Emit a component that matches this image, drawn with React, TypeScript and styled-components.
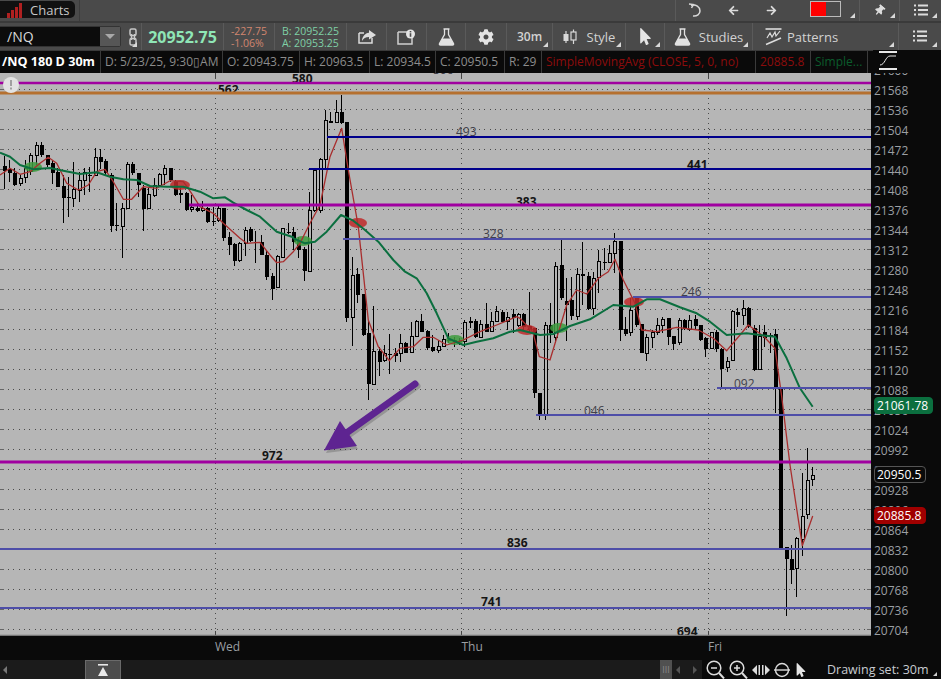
import React from "react";
import styled, { createGlobalStyle } from "styled-components";
import { FaArrowLeft, FaArrowRight, FaCog, FaMousePointer, FaThumbtack } from "react-icons/fa";

const Global = createGlobalStyle`
  html, body { margin: 0; padding: 0; background: #0a0a0a; }
  #root { width: 941px; height: 679px; overflow: hidden; }
  * { box-sizing: border-box; }
`;

const Page = styled.div`
  width: 941px; height: 679px; display: flex; flex-direction: column;
  font-family: "Open Sans", "Liberation Sans", sans-serif; background: #0a0a0a; overflow: hidden;
  & > * { flex: none; }
`;
const TopBar = styled.div`
  height: 23px; display: flex; align-items: stretch; background: #4a4a4a; border-bottom: 2px solid #3a3a3a;
`;
const TabHolder = styled.div`
  width: 80px; padding: 1px 0 0 0; border-right: 1px solid #3c3c3c;
`;
const Tab = styled.div`
  width: 75px; height: 17px; background: #111; border-radius: 0 5px 5px 0; display: flex; align-items: center;
  gap: 7px; padding-left: 7px; color: #c8c8c8; font-size: 13px;
`;
const Spacer = styled.div`flex: 1;`;
const ToolBar = styled.div`
  height: 28px; display: flex; align-items: stretch; background: #4a4a4a; border-bottom: 1px solid #3a3a3a;
`;
const Cell = styled.div<{ $w: number; $sep?: boolean; $tri?: boolean; $gap?: number; $lead?: boolean; $strong?: boolean; $inset?: number }>`
  position: relative; width: ${(p) => p.$w}px; flex: none; display: flex; align-items: center;
  justify-content: ${(p) => (p.$inset ? "flex-start" : "center")};
  padding-left: ${(p) => p.$inset ?? 0}px;
  gap: ${(p) => p.$gap ?? 5}px; color: #d2d2d2; font-size: ${(p) => (p.$strong ? 12 : 13)}px;
  font-weight: ${(p) => (p.$strong ? 600 : 400)};
  border-right: ${(p) => (p.$sep === false ? "none" : "1px solid #5a5a5a")};
  border-left: ${(p) => (p.$lead ? "1px solid #5a5a5a" : "none")};
  ${(p) => p.$tri && `&::after { content: ""; position: absolute; right: 4px; bottom: 3px; border-style: solid;
    border-width: 0 0 5px 5px; border-color: transparent transparent #d8d8d8 transparent; }`}
`;
const SymbolCell = styled.div`
  width: 125px; flex: none; padding: 3px 0 3px 0; display: flex;
`;
const SymbolBox = styled.div`
  width: 121px; background: #0c0c0c; border-radius: 0 3px 3px 0; display: flex; justify-content: space-between;
  align-items: stretch; color: #d8d8d8; font-size: 14px; border: 1px solid #333; border-left: none;
`;
const SymbolText = styled.span`padding-left: 7px; line-height: 19px;`;
const Drop = styled.div`
  width: 20px; background: #565656; display: flex; align-items: center; justify-content: center;
  &::after { content: ""; border-style: solid; border-width: 5px 5px 0 5px; border-color: #a8a8a8 transparent transparent transparent; }
`;
const Price = styled.span`color: #8fe6b6; font-size: 16px; font-weight: 700;`;
const Stack = styled.div<{ $c: string }>`
  display: flex; flex-direction: column; font-size: 10.5px; line-height: 12px; color: ${(p) => p.$c}; align-items: flex-start;
`;
const InfoBar = styled.div`
  height: 22px; display: flex; background: #0a0a0a; font-size: 12px; line-height: 21px;
`;
const Info = styled.div<{ $w: number; $c?: string; $b?: boolean }>`
  width: ${(p) => p.$w}px; flex: none; padding: 0 4px; overflow: hidden; white-space: nowrap;
  padding-left: ${(p) => (p.$b ? 2 : 4)}px;
  color: ${(p) => p.$c ?? "#8c8c8c"}; font-weight: ${(p) => (p.$b ? 700 : 400)};
  font-size: ${(p) => (p.$b ? "12.6px" : "12px")};
  border-right: 1px solid #3a3a3a;
`;
const ScaleBox = styled.div`
  flex: 1; margin-left: 5px; margin-top: -1px; padding: 1px 0 0 6px; height: 23px; background: #0a0a0a; position: relative; z-index: 2;
`;
const ChartRow = styled.div`height: 563px; display: flex;`;
const ChartBox = styled.div`
  position: relative; width: 871px; flex: none; background: #b6b6b6; overflow: hidden;
  svg { display: block; }
`;
const Axis = styled.div`
  position: relative; flex: 1; background: #0a0a0a; overflow: hidden; padding-left: 3px;
`;
const AxisList = styled.div`margin-top: -12px; display: flex; flex-direction: column;`;
const AxisLabel = styled.div`
  height: 20px; line-height: 20px; font-size: 12px; color: #9b9fa3;
`;
const Badge = styled.div<{ $bg: string; $top: number; $w: number; $bd?: string }>`
  position: absolute; left: 3px; top: ${(p) => p.$top}px; width: ${(p) => p.$w}px; height: 17px; background: ${(p) => p.$bg};
  border: 1px solid ${(p) => p.$bd ?? p.$bg}; border-radius: 4px; color: #fff; font-size: 12px; line-height: 15px; padding-left: 2px;
`;
const TimeAxis = styled.div`
  height: 24px; display: flex; padding-left: 215px; background: #0a0a0a; font-size: 12px; line-height: 22px; color: #9b9fa3;
`;
const TimeLabel = styled.div`width: 246.5px; flex: none;`;
const Bottom = styled.div`height: 19px; display: flex; align-items: stretch; background: #0a0a0a; overflow: hidden;`;
const Track = styled.div`
  width: 702px; background: #1b1b1b; display: flex; align-items: center;
`;
const ArrowGlyph = styled.div<{ $dir: "l" | "r"; $c?: string; $inset?: number }>`
  width: 0; height: 0; border-style: solid; border-width: 4px 0 4px 0; margin-left: ${(p) => p.$inset ?? 0}px;
  ${(p) => p.$dir === "l" ? `border-right: 4px solid ${p.$c ?? "#777"};` : `border-left: 4px solid ${p.$c ?? "#777"};`}
  border-top-color: transparent; border-bottom-color: transparent;
`;
const Thumb = styled.div`
  margin-left: 78px; width: 36px; height: 19px; background: #4c4c4c; border: 1px solid #6a6a6a; border-bottom: none;
  display: flex; align-items: center; justify-content: center;
`;
const ThumbRight = styled.div`
  margin-left: 539px; width: 12px; height: 19px; background: #505050; color: #888; font-size: 9px;
  display: flex; align-items: center; justify-content: center; letter-spacing: 0;
`;
const TrackArrows = styled.div`display: flex; align-items: center; gap: 13px; margin-left: 4px;`;
const ZoomTools = styled.div`
  display: flex; align-items: center; gap: 4px; padding-left: 4px; height: 100%;
`;
const Drawing = styled.div`
  position: relative; margin-left: 15px; width: 112px; color: #c8ccd0; font-size: 12.5px; line-height: 18px; white-space: nowrap;
  &::after { content: ""; position: absolute; right: 2px; bottom: 3px; border-style: solid; border-width: 0 0 4px 4px;
    border-color: transparent transparent #ccc transparent; }
`;
const Swatch = styled.div`
  width: 31px; height: 16px; border: 1px solid #bbb; display: flex; margin-top: -4px;
`;
const SwatchRed = styled.div`width: 15px; background: #ff0000;`;
const Tack = styled(FaThumbtack)`transform: rotate(40deg);`;

type C = [number, number, number, number, number];
const segA: C[] = [
[168,182,138,238,1],[178,190,150,215,1],[190,225,175,228,1],[205,220,195,228,0],[175,203,150,218,0],[135,185,130,195,0],[105,137,97,165,0],[105,135,97,140,1],
[135,165,135,170,1],[158,188,150,222,1],[186,230,175,232,1],[228,263,195,338,1],[261,263,200,322,1],[238,265,155,290,0],[210,240,185,275,0],[188,212,175,255,0],
[194,196,170,245,1],[142,196,115,198,0],[142,155,118,178,1],[152,190,148,195,1],[195,347,190,365,1],[346,349,278,362,1],[295,350,280,445,0],[163,295,155,297,0],
[163,190,155,195,1],[190,225,190,262,1],[235,298,225,362,1],[252,295,235,298,0],[225,255,205,262,0],[193,225,190,228,0],[175,192,165,225,0],[175,210,175,215,1],
[212,255,210,258,1],[250,254,235,280,1],[250,300,245,302,1],[292,298,255,305,0],[295,302,275,305,1],[295,300,272,305,0],[295,335,290,338,1],[334,337,290,348,1],
[295,332,285,335,0],[295,385,295,392,1],[382,405,365,435,1],[402,452,400,468,1],[400,452,395,455,0],[360,400,350,437,0],[358,392,350,395,1],[395,398,362,460,1],
[397,435,375,435,1],[435,500,420,510,1],[498,537,490,570,1],[440,532,435,535,0],[355,443,355,445,0],[366,370,340,372,1]];
const segB: C[] = [
[425,455,412,480,1],[452,480,440,505,1],[478,543,470,572,1],[360,543,305,545,0],[240,362,238,365,0],[208,360,205,370,0],[92,208,60,235,0],[92,98,65,100,1],
[67,97,30,100,0],[67,100,15,102,1],[97,683,97,697,1],[555,683,500,767,0],[552,614,535,640,1],[612,735,612,737,1],[730,882,690,930,1],[785,884,648,885,0],
[783,815,770,858,1],[790,812,765,815,0],[792,795,732,852,1],[790,798,775,817,1],[760,790,732,815,0],[760,788,757,790,1],[740,788,695,790,0],[693,740,690,742,0],
[693,725,672,727,1],[723,775,720,780,1],[772,782,735,785,1],[768,782,750,790,0],[748,768,735,770,0],[749,752,728,760,1],[750,757,740,770,1],[754,757,745,765,1],
[697,755,690,770,0],[694,698,680,715,1],[692,742,688,745,1],[703,742,690,745,0],[703,725,638,727,1],[695,725,665,727,0],[664,695,648,697,0],[666,695,660,697,1],
[683,693,665,720,0],[672,684,658,730,1],[672,705,668,710,0],[672,712,670,720,1],[708,720,605,730,1],[715,910,715,925,1]];
const segC: C[] = [
[490,555,490,570,1],[285,555,275,570,0],[285,310,218,340,1],[108,322,95,340,0],[105,205,25,210,1],[212,225,145,332,1],[210,258,140,270,1],[133,258,115,270,0],
[133,138,35,225,1],[138,237,125,240,1],[145,235,125,255,0],[95,142,60,190,0],[96,100,55,120,1],[70,97,45,100,0],[34,70,10,130,0],[33,300,33,332,1],
[297,312,260,318,1],[240,307,205,318,0],[205,285,200,290,1],[282,368,282,370,1],[322,370,312,392,0],[307,322,300,355,0],[287,307,265,315,0],[267,285,262,310,0],
[265,320,265,345,1],[318,342,318,360,1],[270,338,265,345,0],[270,298,268,300,1],[272,298,255,302,0],[268,288,255,300,1],[286,330,285,333,1],[325,356,322,380,1],
[307,356,305,358,0],[307,356,300,365,1],[358,416,355,472,1],[395,412,380,425,0],[245,390,240,392,0],[245,254,235,290,1],[235,257,210,285,0],[234,290,232,295,1],
[294,420,285,422,1],[320,418,285,420,0],[305,325,285,350,1],[316,320,310,370,1],[313,475,298,548,1],[478,956,478,956,1]];
const segD: C[] = [
[502,537,502,707,1],[538,569,495,612,1],[475,566,470,650,0],[409,478,278,528,0],[301,402,204,417,0],[287,299,262,318,0]];

const toPx = (base: number, rows: C[]) =>
  rows.map(([t, b, h, l, f]) => ({ t: base + t / 3, b: base + b / 3, h: base + h / 3, l: base + l / 3, f }));
const candles = [...toPx(110, segA), ...toPx(90, segB), ...toPx(230, segC), ...toPx(380, segD)];

const pts = (ox: number, oy: number, a: number[][]) => a.map(([x, y]) => `${(ox + x / 3).toFixed(1)},${(oy + y / 3).toFixed(1)}`).join(" ");
const green = [
  pts(0, 110, [[0,128],[30,140],[60,165],[100,178],[150,174],[190,182],[240,192],[290,187],[330,200],[370,208],[410,210],[450,228],[500,230],[550,230],[600,245],[640,265],[675,262],[700,278],[740,300],[780,320],[830,365],[880,382]]),
  pts(290, 90, [[10,445],[45,460],[75,455],[110,425],[153,375],[190,392],[225,420],[265,455],[310,510],[345,545],[380,565],[410,610],[440,670],[475,745],[520,765],[560,755],[610,745],[660,725],[690,720]]),
  pts(520, 230, [[0,300],[60,315],[100,312],[150,288],[210,268],[280,225],[340,230],[380,208],[420,208],[480,232],[530,250],[570,275],[620,315],[680,310],[720,315],[765,320],[800,385],[840,475],[878,530]]),
].join(" ");
const red = [
  pts(0, 110, [[0,195],[30,175],[60,193],[90,185],[120,160],[145,142],[170,160],[200,220],[235,240],[265,225],[290,185],[315,178],[340,215],[370,268],[395,268],[430,230],[470,235],[510,212],[550,215],[565,235],[600,290],[640,310],[670,340],[720,385],[740,400],[780,397],[810,435],[830,458],[850,455],[880,425]]),
  pts(290, 90, [[30,460],[60,400],[90,345],[120,200],[155,115],[175,240],[205,410],[235,690],[265,770],[298,812],[330,775],[370,770],[400,742],[430,742],[470,765],[520,750],[570,725],[620,705],[680,680]]),
  pts(520, 230, [[0,265],[38,305],[58,380],[90,390],[140,225],[170,180],[200,192],[235,145],[265,125],[285,88],[310,150],[345,220],[365,300],[410,305],[470,292],[535,300],[580,325],[620,362],[660,315],[685,285],[730,318],[765,355]]),
  pts(740, 380, [[125,50],[150,255],[187,497],[218,408]]),
].join(" ");

const ovals: [number, number, number, string][] = [
  [33, 167, 9, "#3e9c3e"], [180, 185, 10, "#c02a2a"], [303, 241, 9, "#3e9c3e"], [358, 223, 9, "#c02a2a"],
  [455, 340, 9, "#3e9c3e"], [527, 330, 10, "#c02a2a"], [559, 328, 9, "#3e9c3e"], [634, 302, 10, "#c02a2a"],
];
const hlines: [number, number, string, number][] = [
  [0, 83, "#a000a0", 2.5], [0, 93, "#b5702f", 3], [327, 137, "#00008b", 2], [309, 169, "#00008b", 2], [189, 205, "#a000a0", 3],
  [343, 239, "#4e4ea8", 2], [633, 297, "#4e4ea8", 2], [717, 388, "#4e4ea8", 2], [536, 415, "#4e4ea8", 2], [0, 462, "#a000a0", 3],
  [0, 549, "#4e4ea8", 2], [0, 608, "#4e4ea8", 2],
];
const tags: [number, number, string, boolean][] = [
  [433, 74, "506", false], [292, 83, "580", true], [218, 94, "562", true], [456, 136, "493", false], [687, 169, "441", true], [516, 206, "383", true],
  [483, 238, "328", false], [681, 296, "246", false], [734, 388, "092", false], [584, 415, "046", false], [262, 460, "972", true],
  [507, 547, "836", true], [481, 606, "741", true], [677, 636, "694", true],
];
const days = [215.5, 461.5, 708.5];
const rows = Array.from({ length: 28 }, (_, k) => 89.5 + 20 * k);

const ChartSvg = () => (
  <svg width="871" height="563" viewBox="0 73 871 563" fontFamily="'Open Sans', sans-serif" fontSize="12">
    {rows.map((y) => (
      <g key={y}>
        <line x1="8" x2="866" y1={y} y2={y} stroke="#4a4a4a" strokeDasharray="1 4.35" shapeRendering="crispEdges" />
        <line x1="0" x2="4" y1={y} y2={y} stroke="#666" shapeRendering="crispEdges" />
        <line x1="867" x2="871" y1={y} y2={y} stroke="#666" shapeRendering="crispEdges" />
      </g>
    ))}
    {days.map((x) => (
      <g key={x}>
        <line x1={x} x2={x} y1="73" y2="636" stroke="#4a4a4a" strokeDasharray="1 4" shapeRendering="crispEdges" />
        <line x1={x} x2={x} y1="73" y2="78" stroke="#444" shapeRendering="crispEdges" />
        <line x1={x} x2={x} y1="631" y2="636" stroke="#444" shapeRendering="crispEdges" />
      </g>
    ))}
    {candles.map((c, i) => {
      const x = Math.round(3.7 + 5.356 * i) + 0.5;
      return (
        <g key={i} shapeRendering="crispEdges">
          <line x1={x} x2={x} y1={c.h} y2={c.l} stroke="#000" />
          <rect
            x={x - (c.f ? 2 : 1.5)}
            y={c.t}
            width={c.f ? 4 : 3}
            height={Math.max(1, c.b - c.t)}
            fill={c.f ? "#000" : "#b6b6b6"}
            stroke={c.f ? "none" : "#000"}
          />
        </g>
      );
    })}
    {ovals.map(([x, y, r, c]) => (
      <ellipse key={x} cx={x} cy={y} rx={r} ry="5" fill={c} opacity="0.85" />
    ))}
    <polyline points={red} fill="none" stroke="#a92e2e" strokeWidth="1.3" strokeLinejoin="round" />
    <polyline points={green} fill="none" stroke="#0b6f3f" strokeWidth="2" strokeLinejoin="round" />
    {tags.map(([x, y, t, b]) => (
      <text key={t} x={x} y={y} fill={b ? "#151515" : "#40404a"} fontWeight={b ? 700 : 400}>{t}</text>
    ))}
    {hlines.map(([x, y, c, w]) => (
      <line key={`${x}-${y}`} x1={x} x2="871" y1={y} y2={y} stroke={c} strokeWidth={w} />
    ))}
    <line x1="0" x2="871" y1="635.5" y2="635.5" stroke="#777" strokeWidth="1.5" />
    <line x1="417" y1="386" x2="347" y2="436" stroke="#000" strokeOpacity="0.18" strokeWidth="7" strokeLinecap="round" />
    <polygon points="326,453 341,424 358,449" fill="#000" fillOpacity="0.18" />
    <line x1="415" y1="384" x2="345" y2="434" stroke="#5e2491" strokeWidth="7" strokeLinecap="round" />
    <polygon points="324,450.5 340,421 357,446" fill="#5e2491" />
    <circle cx="11" cy="85" r="8" fill="#e2e2e2" />
    <rect x="10" y="80" width="2" height="6" fill="#a0a0a0" />
    <rect x="10" y="87.5" width="2" height="2" fill="#a0a0a0" />
  </svg>
);

const BarsIcon = () => (
  <svg width="16" height="16" viewBox="0 0 16 16">
    {[[0, 11], [4, 8], [8, 5], [12, 1]].map(([x, y]) => (
      <rect key={x} x={x} y={y} width="3" height={16 - y} fill="#b02020" />
    ))}
  </svg>
);
const UndoIcon = () => (
  <svg width="14" height="15" viewBox="0 0 14 15" fill="none" stroke="#d8d8d8" strokeWidth="1.5">
    <path d="M3 2.5 C8 1 12 4 12 8 C12 11 9 13.5 5 13" />
    <path d="M1 1 L5.5 1.5 L3.5 5" />
  </svg>
);
const MenuIcon = () => (
  <svg width="14" height="13" viewBox="0 0 14 13" fill="#dcdcdc">
    {[0.5, 5, 9.5].map((y) => (
      <g key={y}>
        <rect x="0" y={y} width="2" height="2" />
        <rect x="4" y={y} width="10" height="2" />
      </g>
    ))}
  </svg>
);
const ChainIcon = () => (
  <svg width="9" height="18" viewBox="0 0 9 18" fill="none" stroke="#c8c8c8" strokeWidth="1.5">
    <rect x="1" y="1" width="6" height="6.5" rx="1.5" />
    <rect x="1" y="10.5" width="6" height="6.5" rx="1.5" />
    <path d="M2.5 6 V12 M5.5 6 V12" />
  </svg>
);
const ShareIcon = () => (
  <svg width="18" height="15" viewBox="0 0 18 15">
    <path d="M1 4 H6 M1 4 V14 H14 V9" fill="none" stroke="#dcdcdc" strokeWidth="1.5" />
    <path d="M11 1 L18 6 L11 10.5 V8 C7.5 8 5.5 9.5 4 12 C4 8 7 4 11 3.8 Z" fill="#dcdcdc" />
  </svg>
);
const InfoIcon = () => (
  <svg width="19" height="16" viewBox="0 0 19 16">
    <path d="M1 3 H11 M1 3 V15 H15 V9" fill="none" stroke="#cfcfcf" strokeWidth="1.5" />
    <circle cx="13.5" cy="5" r="4.5" fill="#e4e4e4" />
    <rect x="12.7" y="4.2" width="1.6" height="3.6" fill="#4a4a4a" />
    <rect x="12.7" y="2" width="1.6" height="1.4" fill="#4a4a4a" />
  </svg>
);
const FlaskIcon = ({ s = 17 }: { s?: number }) => (
  <svg width={s} height={s + 1} viewBox="0 0 16 18">
    <path d="M5 1 H11 M6 1 V6.5 L1 15.5 Q0.5 17 2 17 H14 Q15.5 17 15 15.5 L10 6.5 V1" fill="none" stroke="#e2e2e2" strokeWidth="1.3" />
    <path d="M3.8 10.5 H12.2 L15 15.5 Q15.5 17 14 17 H2 Q0.5 17 1 15.5 Z" fill="#e2e2e2" />
  </svg>
);
const CandleIcon = () => (
  <svg width="14" height="16" viewBox="0 0 14 16">
    <path d="M3 2 V14 M10.5 0.5 V15" stroke="#d8d8d8" strokeWidth="1.2" />
    <rect x="0.5" y="5" width="5" height="7" fill="#d8d8d8" />
    <rect x="8" y="3" width="5" height="8" fill="#4a4a4a" stroke="#d8d8d8" strokeWidth="1.2" />
  </svg>
);
const PatternIcon = () => (
  <svg width="17" height="18" viewBox="0 0 17 18" fill="none" stroke="#dcdcdc" strokeWidth="1.2">
    <path d="M0.5 1 H16.5" strokeWidth="1.6" />
    <path d="M2 10 L5 5 L7 9 L10 4 L11 8 L15 3" />
    <path d="M1 16.5 L16 10" strokeWidth="1.6" />
  </svg>
);
const ScaleIcon = () => (
  <svg width="18" height="19" viewBox="0 0 18 19" fill="none" stroke="#e8e8e8">
    <path d="M0 1 H18 M0 18 H18" strokeWidth="2" />
    <path d="M1 14 C6 14 6.5 5 11 5 H17" strokeWidth="1" />
  </svg>
);
const Magnifier = ({ plus }: { plus?: boolean }) => (
  <svg width="19" height="20" viewBox="0 0 19 20" fill="none" stroke="#dcdcdc" strokeWidth="1.5">
    <circle cx="8" cy="8" r="6.8" />
    <path d="M13 13 L18 18.5" strokeWidth="2" />
    <path d="M5 8 H11" />
    {plus && <path d="M8 5 V11" />}
  </svg>
);
const FitIcon = () => (
  <svg width="18" height="12" viewBox="0 0 18 12" fill="#dcdcdc">
    <path d="M0 6 L5 1 V11 Z M18 6 L13 1 V11 Z" />
    <rect x="6.5" y="1" width="1.5" height="10" />
    <rect x="10" y="1" width="1.5" height="10" />
  </svg>
);
const CircleLine = () => (
  <svg width="16" height="16" viewBox="0 0 16 16" fill="none" stroke="#dcdcdc" strokeWidth="1.4">
    <circle cx="8" cy="8" r="6.5" />
    <path d="M0 8 H16" />
  </svg>
);
const ThumbIcon = () => (
  <svg width="10" height="12" viewBox="0 0 10 12" fill="#e8e8e8">
    <rect x="0" y="0" width="10" height="1.6" />
    <path d="M5 3 L10 12 H0 Z" />
  </svg>
);

const axisValues = Array.from({ length: 29 }, (_, k) => 21600 - 32 * k);

export default function App() {
  return (
    <Page>
      <Global />
      <TopBar>
        <TabHolder>
          <Tab><BarsIcon />Charts</Tab>
        </TabHolder>
        <Spacer />
        <Cell $w={39} $sep={false} $lead><UndoIcon /></Cell>
        <Cell $w={38} $sep={false}><FaArrowLeft size={11} color="#dcdcdc" /></Cell>
        <Cell $w={39} $sep={false}><FaArrowRight size={11} color="#dcdcdc" /></Cell>
        <Cell $w={69} $tri><Swatch><SwatchRed /></Swatch></Cell>
        <Cell $w={40} $tri><Tack size={11} color="#dcdcdc" /></Cell>
        <Cell $w={41} $tri $sep={false}><MenuIcon /></Cell>
      </TopBar>
      <ToolBar>
        <SymbolCell>
          <SymbolBox>
            <SymbolText>/NQ</SymbolText>
            <Drop />
          </SymbolBox>
        </SymbolCell>
        <Cell $w={17} $tri><ChainIcon /></Cell>
        <Cell $w={82}><Price>20952.75</Price></Cell>
        <Cell $w={51}><Stack $c="#d2866f"><span>-227.75</span><span>-1.06%</span></Stack></Cell>
        <Cell $w={72}><Stack $c="#7fd0a6"><span>B: 20952.25</span><span>A: 20953.25</span></Stack></Cell>
        <Cell $w={40}><ShareIcon /></Cell>
        <Cell $w={40}><InfoIcon /></Cell>
        <Cell $w={39}><FlaskIcon /></Cell>
        <Cell $w={41}><FaCog size={16} color="#e4e4e4" /></Cell>
        <Cell $w={46} $tri $strong>30m</Cell>
        <Cell $w={73} $tri $gap={10}><CandleIcon />Style</Cell>
        <Cell $w={39} $tri><FaMousePointer size={17} color="#e4e4e4" /></Cell>
        <Cell $w={88} $tri $gap={8}><FlaskIcon />Studies</Cell>
        <Cell $w={146} $tri $gap={5} $inset={12}><PatternIcon />Patterns</Cell>
        <Cell $w={42} $tri $sep={false}><MenuIcon /></Cell>
      </ToolBar>
      <InfoBar>
        <Info $w={101} $b $c="#fff">/NQ 180 D 30m</Info>
        <Info $w={122}>D: 5/23/25, 9:30{"\u25AF"}AM</Info>
        <Info $w={77}>O: 20943.75</Info>
        <Info $w={70}>H: 20963.5</Info>
        <Info $w={66}>L: 20934.5</Info>
        <Info $w={69}>C: 20950.5</Info>
        <Info $w={37}>R: 29</Info>
        <Info $w={214} $c="#8c0c0c">SimpleMovingAvg (CLOSE, 5, 0, no)</Info>
        <Info $w={55} $c="#8c0c0c">20885.8</Info>
        <Info $w={57} $c="#0a5c2c">Simple...</Info>
        <ScaleBox><ScaleIcon /></ScaleBox>
      </InfoBar>
      <ChartRow>
        <ChartBox><ChartSvg /></ChartBox>
        <Axis>
          <AxisList>
            {axisValues.map((v) => <AxisLabel key={v}>{v}</AxisLabel>)}
          </AxisList>
          <Badge $bg="#0b6f3f" $top={324} $w={59}>21061.78</Badge>
          <Badge $bg="#0a0a0a" $bd="#555" $top={393} $w={52}>20950.5</Badge>
          <Badge $bg="#a00000" $top={434} $w={52}>20885.8</Badge>
        </Axis>
      </ChartRow>
      <TimeAxis>
        <TimeLabel>Wed</TimeLabel>
        <TimeLabel>Thu</TimeLabel>
        <TimeLabel>Fri</TimeLabel>
      </TimeAxis>
      <Bottom>
        <Track>
          <ArrowGlyph $dir="l" $inset={3} />
          <Thumb><ThumbIcon /></Thumb>
          <ThumbRight>III</ThumbRight>
          <TrackArrows>
            <ArrowGlyph $dir="l" $c="#555" />
            <ArrowGlyph $dir="r" $c="#555" />
          </TrackArrows>
        </Track>
        <ZoomTools>
          <Magnifier />
          <Magnifier plus />
          <FitIcon />
          <CircleLine />
          <FaMousePointer size={14} color="#e4e4e4" />
          <Drawing>Drawing set: 30m</Drawing>
        </ZoomTools>
      </Bottom>
    </Page>
  );
}
